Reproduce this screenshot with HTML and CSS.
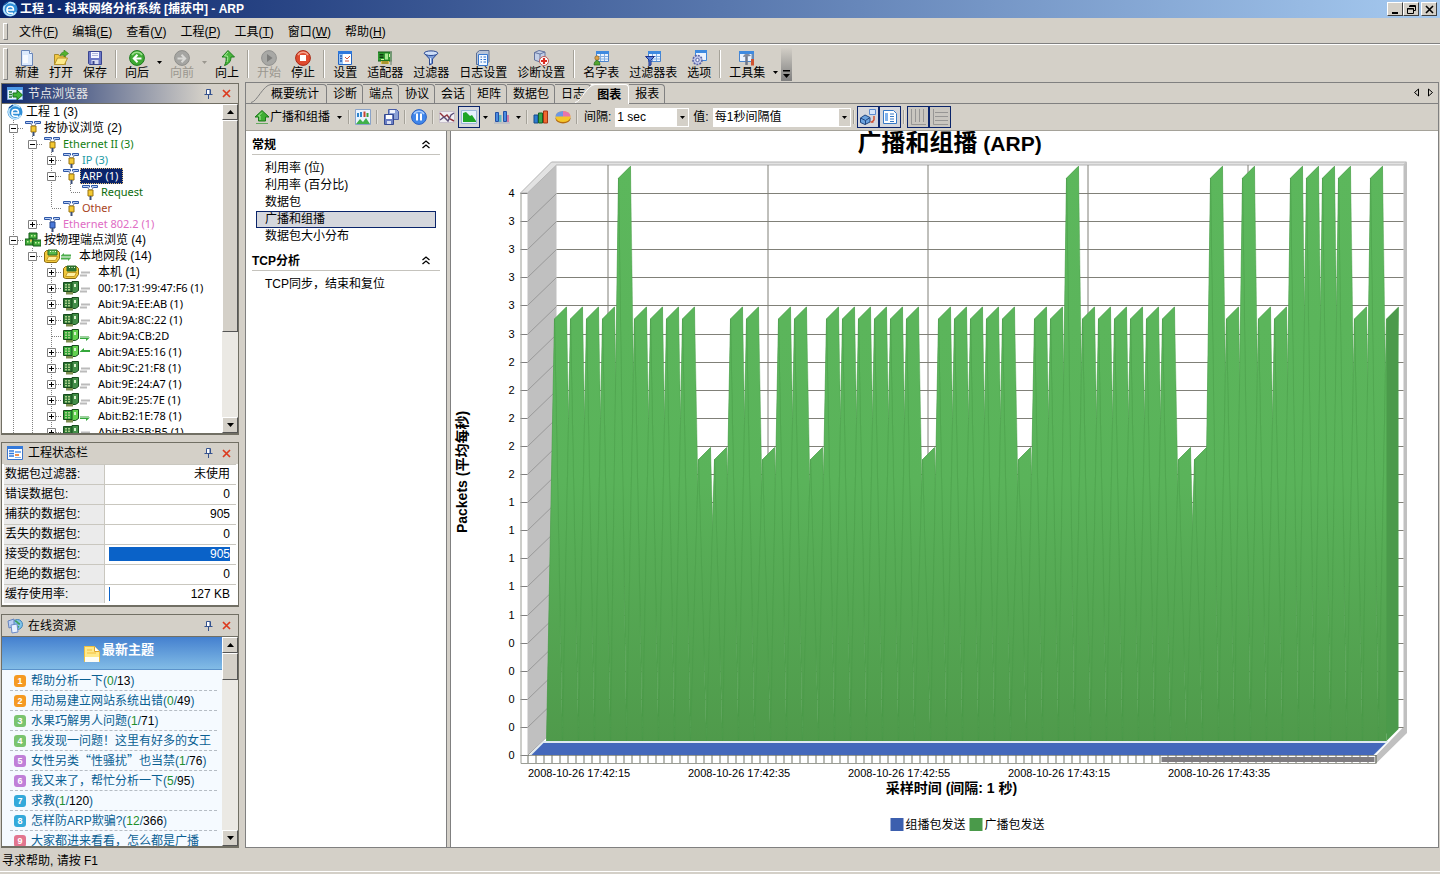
FILE: index.html
```html
<!DOCTYPE html>
<html lang="zh-CN">
<head>
<meta charset="utf-8">
<title>工程 1 - 科来网络分析系统 [捕获中] - ARP</title>
<link rel="stylesheet" href="styles.css">
</head>
<body>
<svg class="sprite" aria-hidden="true">
  <symbol id="i-logo" viewBox="0 0 16 16"><circle cx="8" cy="8" r="7.5" fill="#2f8fd8"/><path d="M13 3.5A6.5 6.5 0 1 0 14 11" fill="none" stroke="#bfe4fb" stroke-width="1.6"/><path d="M5 9h6.5A3.3 3.3 0 1 0 8 12.200h3" fill="none" stroke="#fff" stroke-width="1.500"/><path d="M2 4 6 1" stroke="#0d4f9e" stroke-width="1.500"/></symbol>
  <symbol id="i-new" viewBox="0 0 16 16"><path d="M2.500.5h8l3 3v12h-11z" fill="#dceafc" stroke="#6a86b8"/><path d="M10.500.5v3h3" fill="#fff" stroke="#6a86b8"/><path d="M4 5h5v8H4z" fill="#f6faff"/></symbol>
  <symbol id="i-open" viewBox="0 0 16 16"><path d="M1.500 14.500v-10h4l1 1.500h6v8.500z" fill="#f3c945" stroke="#a98a2b"/><path d="m1.500 14.500 3-6.500h10l-3 6.500z" fill="#fdea8a" stroke="#b8952c"/><path d="M7 5.500c1-3 3-3.500 4-3.500V0l4.500 3.500L11 7V5c-1.500-.3-3 0-4 .5z" fill="#54b32e" stroke="#2e7f1d" stroke-width=".6"/></symbol>
  <symbol id="i-save" viewBox="0 0 16 16"><path d="M1.500 1.500h13v13h-12l-1-1z" fill="#6d78c6" stroke="#3a4590"/><path d="M4 2h8v6H4z" fill="#f6f7ff"/><path d="M5 3.500h6M5 5.500h6" stroke="#b0b8dd"/><path d="M4.500 10h7v4h-7z" fill="#d7dbf0"/><path d="M5.500 11h2v3h-2z" fill="#3a4590"/></symbol>
  <symbol id="i-back" viewBox="0 0 16 16"><circle cx="8" cy="8" r="7.400" fill="#3faa35" stroke="#1d7a1d"/><path d="M3 5a6 6 0 0 1 10 0" fill="none" stroke="#9be08d" stroke-width="1.500"/><path d="M12.500 8.500H5M8.500 4.800 4.800 8.500l3.700 3.700" fill="none" stroke="#fff" stroke-width="2"/></symbol>
  <symbol id="i-fwd" viewBox="0 0 16 16"><circle cx="8" cy="8" r="7.400" fill="#a5a5a2" stroke="#8e8e8b"/><path d="M3.500 8.500H11M7.500 4.800l3.700 3.700-3.700 3.700" fill="none" stroke="#d9d9d6" stroke-width="2"/></symbol>
  <symbol id="i-up" viewBox="0 0 16 16"><path d="M9 .5 15.500 7H12c0 4-2 7-6.500 8.500C7 12.500 7.500 10 7 7H3z" fill="#49b53c" stroke="#1c7c1c"/><path d="M9 2 5.500 6H8.500c.5 2 .3 4-.5 6" fill="none" stroke="#a8eb99"/></symbol>
  <symbol id="i-play" viewBox="0 0 16 16"><circle cx="8" cy="8" r="7.400" fill="#a8a8a5" stroke="#929290"/><path d="m6 4 5.500 4L6 12z" fill="#7e7e7c"/></symbol>
  <symbol id="i-stop" viewBox="0 0 16 16"><circle cx="8" cy="8" r="7.400" fill="#df4a2e" stroke="#a92a16"/><path d="M3 5a6 6 0 0 1 10 0" fill="none" stroke="#f5a48e" stroke-width="1.500"/><path d="M5 5h6v6H5z" fill="#fff"/></symbol>
  <symbol id="i-set" viewBox="0 0 16 16"><path d="M1.500 1.500h13v13h-13z" fill="#fff" stroke="#2465c2"/><path d="M1 1h14v3H1z" fill="#2d78dd"/><path d="M2 4h4v10H2z" fill="#9cc5f4"/><path d="M3 6h2M3 8.500h2M3 11h2" stroke="#1f5cb8" stroke-width="1.300"/><path d="m8 7 2 2 3-3M8 11h4" fill="none" stroke="#d2553e"/></symbol>
  <symbol id="i-card" viewBox="0 0 16 16"><path d="M1 2h14v9H1z" fill="#2f9a30"/><path d="M1 2h14M1 11h14" stroke="#135813"/><path d="M2.500 4h4v1.500h-4zM2.500 6.500h4V8h-4z" fill="#103c10"/><path d="M8 3.500h3v6H8z" fill="#a9e893"/><path d="M12.500 4v3M4 9.500h3" stroke="#d8f4a9"/><path d="M4 11h8v3H4z" fill="#d9c04a"/><path d="M6 11v3M8 11v3M10 11v3" stroke="#7a6a1b"/><path d="M14 1v14" stroke="#8a9a8a" stroke-width="1.500"/></symbol>
  <symbol id="i-filter" viewBox="0 0 16 16"><path d="M1.500 3.500 6.500 9v6l3-1.500V9l5-5.500z" fill="#7ea0dc" stroke="#2c4a93"/><ellipse cx="8" cy="3.200" rx="6.800" ry="2.300" fill="#cfdff8" stroke="#2c4a93"/><path d="M7.500 8v5" fill="none" stroke="#e8f1ff"/></symbol>
  <symbol id="i-log" viewBox="0 0 16 16"><path d="m1.500 3 3-2.500h9.500v11l-3 3h-9.500z" fill="#b7c3d8" stroke="#5a6d92"/><path d="M3.500 4.500h9v11h-9z" fill="#f3f8ff" stroke="#3878cf"/><path d="M5.500 7h1.500M8.500 7H11M5.500 9.500h1.500M8.500 9.500H11M5.500 12h1.500M8.500 12H11" stroke="#2c6ecb"/></symbol>
  <symbol id="i-diag" viewBox="0 0 16 16"><path d="M1.500 2.500 6 .5l6 1.500v8L7 12l-5.500-2z" fill="#c4cfe6" stroke="#6474a0"/><path d="M1.500 2.500 7 4v8M7 4l5-2" fill="none" stroke="#6474a0"/><circle cx="11" cy="11" r="4.500" fill="#fff" stroke="#bd5a54"/><path d="M11 8v6M8 11h6" stroke="#db2b20" stroke-width="2.200"/></symbol>
  <symbol id="i-table" viewBox="0 0 16 16"><path d="M3.500 1.500h12v10h-12z" fill="#eaf3ff" stroke="#4a84cd"/><path d="M3 1h13v3H3z" fill="#3e8ae0"/><path d="M7.500 4v7M11.500 4v7M4 6.500h11M4 9h11" stroke="#80aee3"/></symbol>
  <symbol id="i-names" viewBox="0 0 16 16"><use href="#i-table"/><circle cx="4" cy="8" r="2.200" fill="#dda24b" stroke="#7c5918" stroke-width=".6"/><path d="M1 15c0-6 6-6 6 0z" fill="#51a52e" stroke="#25691a" stroke-width=".7"/></symbol>
  <symbol id="i-ftable" viewBox="0 0 16 16"><use href="#i-table"/><path d="M.5 6.500h9L6 10v5l-2 1v-6z" fill="#5580dc" stroke="#1c2f86"/></symbol>
  <symbol id="i-opt" viewBox="0 0 16 16"><path d="M4.500.5h11v10h-11z" fill="#eaf3ff" stroke="#3e86dc"/><path d="M4 0h12v3H4z" fill="#3e8ae0"/><circle cx="6.500" cy="10" r="4.500" fill="#c3c9ea" stroke="#5863a8" stroke-width="1.600" stroke-dasharray="2 1"/><circle cx="6.500" cy="10" r="1.700" fill="#fff" stroke="#5863a8"/></symbol>
  <symbol id="i-tools" viewBox="0 0 16 16"><path d="M.5 1.500h14v10H.5z" fill="#eaf3ff" stroke="#4a84cd"/><path d="M0 1h15v3H0z" fill="#3e8ae0"/><path d="M7.500 15V6" stroke="#6d7689" stroke-width="2.500"/><path d="M4 7c1-4 6-4 8-1z" fill="#7f8a9f"/><path d="M13.500 4v5" stroke="#6b8db6" stroke-width="2"/><path d="M13.500 9v6.500" stroke="#cf5230" stroke-width="3"/></symbol>
  <symbol id="i-browse" viewBox="0 0 16 16"><path d="M.5 1.500h15v12H.5z" fill="#e5f1ff" stroke="#79a7df"/><path d="M0 1h16v3H0z" fill="#4d9ae8"/><path d="M2 6h3M2 8.500h3M2 11h3" stroke="#237b35" stroke-width="1.500"/><path d="M6 7h4V4l5.500 5L10 14v-3H6z" fill="#3db336" stroke="#156f1b"/></symbol>
  <symbol id="i-status" viewBox="0 0 16 16"><path d="M.5 1.500h15v13H.5z" fill="#fff" stroke="#3c75c9"/><path d="M0 1h16v3H0z" fill="#3379da"/><path d="M2 6h5M2 8.500h5M2 11h5" stroke="#3379da" stroke-width="1.300"/><path d="M8 6h6v2H8zM8 12h6v1H8z" fill="#82b2ee"/><path d="M8 9h4v2H8z" fill="#f2914a"/></symbol>
  <symbol id="i-online" viewBox="0 0 16 16"><circle cx="10.500" cy="6.500" r="5" fill="#7fc2e8" stroke="#4384b8"/><path d="M8 3c3 0 2 3 5 3M8 8l4 1" stroke="#3f9f55" stroke-width="1.600" fill="none"/><path d="m1 3 6-2v7l-5 2z" fill="#bcd0f2" stroke="#6382bd"/><path d="m4 7 6-1 1 8-6 1z" fill="#e8f1ff" stroke="#6b8bc8"/></symbol>
  <symbol id="i-proto" viewBox="0 0 16 16"><path d="M.5 1.500h7v2h-7zM9.500 1.500h6v2h-6z" fill="#b9cff6" stroke="#2e58a8"/><path d="M5.500 3.500 7.500 6h2l2-2.500" fill="#fff" stroke="#68779a"/><path d="M6 6h5v6H6z" fill="var(--p,#f4c933)" stroke="var(--q,#9a7410)"/><path d="M8.500 12v4" stroke="#3a4f78" stroke-width="2"/></symbol>
  <symbol id="i-nodes" viewBox="0 0 16 16"><g id="nodecard"><path d="M4 1h8v6H4z" fill="#3fa83a" stroke="#155b16"/><path d="M6 3h1.500v1.500H6zM9 3h1.500v1.500H9z" fill="#c8f5a0"/></g><use href="#nodecard" x="-4" y="6"/><use href="#nodecard" x="4" y="7"/><path d="M5 7.500h2v2H5z" fill="#e3c24d"/></symbol>
  <symbol id="i-seg" viewBox="0 0 16 16"><path d="M.5 13.500v-9l2-2h11l2 2v6l-3 4h-10z" fill="#f1c83a" stroke="#8a6a12"/><path d="M4 2h9v5H4z" fill="var(--p,#56b84a)" stroke="#2d6d25"/><path d="M6 3.500h1M8.500 3.500h1M11 3.500h1" stroke="#eaffd8"/><path d="m2.500 12.500 2-4h9l-2 4z" fill="#fff0a0" stroke="#c59b25"/></symbol>
  <symbol id="i-host" viewBox="0 0 16 16"><path d="M.5 2.500h11v9H.5z" fill="var(--p,#2c7433)" stroke="#174d1d"/><path d="M2 4h2v1.500H2zM5 4h2v1.500H5zM2 6.500h2V8H2zM5 6.500h2V8H5zM2 9h2v1.500H2zM5 9h2v1.500H5z" fill="#a9cf88"/><path d="M9 1.500h6.500v9l-3 2H9z" fill="var(--q,#438f49)" stroke="#174d1d"/><path d="M11 4h2v3h-2z" fill="#d8f0cc"/><path d="M3 12h7v2.500H3z" fill="#7f8f50"/></symbol>
  <symbol id="i-traf" viewBox="0 0 10 16"><path d="M0 7.500 3 5v1.500h7v2H0zM10 10l-3 3v-1.500H0v-2h10z" fill="currentColor"/></symbol>
  <symbol id="i-in" viewBox="0 0 10 16"><path d="M0 7.500 4 4v2h6v2H0z" fill="#35a83b"/></symbol>
  <symbol id="i-out" viewBox="0 0 10 16"><path d="M0 8h9v1H0z" fill="#9ccf9b"/><path d="M10 9.500 6 13v-2H0V9.500z" fill="#35a83b"/></symbol>
  <symbol id="i-idle" viewBox="0 0 10 16"><path d="M1 8.500h9M0 11.500h7" stroke="#bbb" stroke-width="2"/></symbol>
  <symbol id="i-home" viewBox="0 0 16 16"><path d="M8 1.500 15 8h-3.500v4h-7V8H1z" fill="#3fae34" stroke="#1c7a1b"/><path d="M2 14.500h12" stroke="#65a95f"/><path d="M8 3.500 4.500 7H6v4" stroke="#a9eb9d" fill="none"/></symbol>
  <symbol id="i-img" viewBox="0 0 16 16"><path d="M.5.5h15v15H.5z" fill="#e9f3ff" stroke="#8aa3c8"/><path d="M3 4v4M6 3v5" stroke="#2e86cc" stroke-width="2"/><path d="M9.500 2.500V8" stroke="#c84431" stroke-width="2"/><path d="M12.500 4v4" stroke="#3c9d3a" stroke-width="2"/><path d="m1 15 4-5 3 3 3-4 4 6z" fill="#3fb04a"/></symbol>
  <symbol id="i-saves" viewBox="0 0 16 16"><path d="M5.500.5h8l2 2v8h-10z" fill="#8ba0d5" stroke="#4a5ea8"/><path d="M7 1h5v3H7z" fill="#eef2fc"/><path d="M1.500 5.500h9v10h-9z" fill="#6b7fc4" stroke="#35498f"/><path d="M3 6h6v4H3z" fill="#fff"/><path d="M4 12h4v3H4z" fill="#d9dff2"/></symbol>
  <symbol id="i-pause" viewBox="0 0 16 16"><circle cx="8" cy="8" r="7.400" fill="#3f86ea" stroke="#2a5fc0"/><path d="M3 5a6 6 0 0 1 10 0" fill="none" stroke="#a9ccfb" stroke-width="1.500"/><path d="M6 4.500v7M10 4.500v7" stroke="#fff" stroke-width="2"/></symbol>
  <symbol id="i-line" viewBox="0 0 16 16"><path d="M.5 2.500h15v11H.5z" fill="#f0eef2" stroke="#c9c1cb"/><path d="m1 4 4 4 3-2 3 4 4 2" fill="none" stroke="#93343e" stroke-width="1.400"/><path d="m1 11 4-3 4 4 3-6 3-2" fill="none" stroke="#5c4e76" stroke-width="1.400"/></symbol>
  <symbol id="i-area" viewBox="0 0 16 16"><path d="M.5 1.500h15v13H.5z" fill="#e6f1fd" stroke="#9db7d8"/><path d="M2 13V4l3-1 4 4 2-1 4 6v1z" fill="#1ea528"/></symbol>
  <symbol id="i-bars" viewBox="0 0 16 16"><path d="M1.500 3.500h3v9h-3zM9.500 2.500h3v10h-3z" fill="#4a8be0" stroke="#2350a4"/><path d="M5 6h2.500v7H5z" fill="#5ab6c7"/><path d="M13 6h2v7h-2z" fill="#d07ba5"/><path d="M0 14h16" stroke="#a8b1c5"/></symbol>
  <symbol id="i-bar3" viewBox="0 0 16 16"><path d="M1 6h4v8H1z" fill="#2c7cd0" stroke="#174b89"/><path d="M5.500 4h4v10h-4z" fill="#37a74c" stroke="#156327"/><path d="M10.500 2h4v12h-4z" fill="#ef6a2f" stroke="#a63412"/></symbol>
  <symbol id="i-pie" viewBox="0 0 16 16"><ellipse cx="8" cy="9.500" rx="7.500" ry="5" fill="#b56d12"/><ellipse cx="8" cy="7.500" rx="7.500" ry="5.500" fill="#f4c52a"/><path d="M8 7.500V2a7.500 5.500 0 0 1 7.500 5.500z" fill="#e775ae"/><path d="M8 7.500H.5A7.500 5.500 0 0 1 8 2z" fill="#6c97e6"/></symbol>
  <symbol id="i-cube" viewBox="0 0 16 16"><path d="m.5 9 4.500-3 5 2.500V13l-5 2.500-4.500-2z" fill="#6aa2df" stroke="#20457e"/><path d="m.5 9 5 2.500L10 8.500M5.500 11.500v4" stroke="#20457e" fill="none"/><path d="M9.500.5h6v5h-6z" fill="#d5e6fb" stroke="#5b8ad0"/><path d="m12 13 2-2V7M10.500 13h3" stroke="#d14a2a" stroke-width="1.400" fill="none"/></symbol>
  <symbol id="i-legend" viewBox="0 0 16 16"><path d="M1.500 1.500h10l3 3v10h-13z" fill="#fff" stroke="#3779c6"/><path d="M3 4h3v8H3z" fill="#7fb2ee"/><path d="M8 5h4M8 7.500h4M8 10h4M8 12.500h4" stroke="#3779c6"/></symbol>
  <symbol id="i-vgrid" viewBox="0 0 16 16"><path d="M1.500 0v15.500H16M5.500 0v13M9.500 0v13M13.500 0v13" stroke="#8a8a8a" fill="none" stroke-width=".8"/></symbol>
  <symbol id="i-hgrid" viewBox="0 0 16 16"><path d="M1.500 0v15.500H16M3 3.500h13M3 7.500h13M3 11.500h13" stroke="#8a8a8a" fill="none" stroke-width=".8"/></symbol>
  <symbol id="i-drop" viewBox="0 0 5 3"><path d="M0 0h5L2.500 3z" fill="currentColor"/></symbol>
  <symbol id="i-tri" viewBox="0 0 7 4"><path d="M0 4h7L3.500 0z" fill="#000"/></symbol>
  <symbol id="i-pin" viewBox="0 0 9 10"><path d="M2.500.5h4v5h-4zM.5 5.500h8M4.500 6v4" fill="#fff" stroke="#35528e"/><path d="M6 1v5" stroke="#35528e"/></symbol>
  <symbol id="i-x" viewBox="0 0 9 9"><path d="m1 1 7 7M8 1 1 8" stroke="#dc3a1e" stroke-width="1.700"/></symbol>
  <symbol id="i-note" viewBox="0 0 16 18"><path d="M.5 1.500h10l5 5v10H.5z" fill="#ffe98a" stroke="#f0c040"/><path d="M10.500 1.500v5h5" fill="#fff" stroke="#e0a62c"/><path d="M1 12h14v5H1z" fill="#fdfdf5"/><path d="M3 5h5M3 8h9" stroke="#f2bf3e"/></symbol>
  <symbol id="i-chev" viewBox="0 0 8 9"><path d="m.5 4 3.500-3 3.500 3M.5 8 4 5l3.500 3" fill="none" stroke="#000" stroke-width="1.300"/></symbol>
</svg>

<div class="app">
  <header class="titlebar">
    <svg class="ic"><use href="#i-logo"/></svg>
    <h1>工程 1 - 科来网络分析系统 [捕获中] - ARP</h1>
    <div class="winbtns">
      <button aria-label="最小化"><svg viewBox="0 0 9 9"><path d="M1 7h6v2H1z"/></svg></button>
      <button aria-label="还原"><svg viewBox="0 0 9 9"><path d="M2.500.5h6v5h-2M2 1.500h7M.5 3.500h6v5h-6zM0 4h7" fill="none" stroke="#000"/></svg></button>
      <button class="close" aria-label="关闭"><svg viewBox="0 0 9 9"><path d="m1 1 7 7M8 1 1 8" stroke="#000" stroke-width="1.600"/></svg></button>
    </div>
  </header>
  <nav class="menubar">
    <button>文件(<u>F</u>)</button><button>编辑(<u>E</u>)</button><button>查看(<u>V</u>)</button><button>工程(<u>P</u>)</button><button>工具(<u>T</u>)</button><button>窗口(<u>W</u>)</button><button>帮助(<u>H</u>)</button>
  </nav>
  <div class="toolbar">
    <button><svg class="ic"><use href="#i-new"/></svg>新建</button>
    <button><svg class="ic"><use href="#i-open"/></svg>打开</button>
    <button><svg class="ic"><use href="#i-save"/></svg>保存</button>
    <i class="sep"></i>
    <button><svg class="ic"><use href="#i-back"/></svg>向后</button>
    <button class="dd" aria-label="后退列表"><svg class="drop"><use href="#i-drop"/></svg></button>
    <button disabled><svg class="ic"><use href="#i-fwd"/></svg>向前</button>
    <button class="dd" disabled aria-label="前进列表"><svg class="drop"><use href="#i-drop"/></svg></button>
    <button><svg class="ic"><use href="#i-up"/></svg>向上</button>
    <i class="sep"></i>
    <button disabled><svg class="ic"><use href="#i-play"/></svg>开始</button>
    <button><svg class="ic"><use href="#i-stop"/></svg>停止</button>
    <i class="sep"></i>
    <button><svg class="ic"><use href="#i-set"/></svg>设置</button>
    <button><svg class="ic"><use href="#i-card"/></svg>适配器</button>
    <button><svg class="ic"><use href="#i-filter"/></svg>过滤器</button>
    <button><svg class="ic"><use href="#i-log"/></svg>日志设置</button>
    <button><svg class="ic"><use href="#i-diag"/></svg>诊断设置</button>
    <i class="sep"></i>
    <button><svg class="ic"><use href="#i-names"/></svg>名字表</button>
    <button><svg class="ic"><use href="#i-ftable"/></svg>过滤器表</button>
    <button><svg class="ic"><use href="#i-opt"/></svg>选项</button>
    <i class="sep"></i>
    <button><svg class="ic"><use href="#i-tools"/></svg>工具集</button>
    <button class="dd low" aria-label="工具集列表"><svg class="drop"><use href="#i-drop"/></svg></button>
    <button class="more" aria-label="更多"><svg viewBox="0 0 7 8"><path d="M0 0h7v1.500H0zM0 4h7L3.500 8z"/></svg></button>
  </div>

  <div class="work">
    <aside class="dock">
      <section class="panel tree-panel">
        <header class="phead active"><svg class="ic"><use href="#i-browse"/></svg><h2>节点浏览器</h2><button aria-label="固定"><svg class="pin"><use href="#i-pin"/></svg></button><button aria-label="关闭"><svg class="x"><use href="#i-x"/></svg></button></header>
        <div class="pbody">
          <ul class="tree" id="tree"></ul>
          <div class="scroll"><button aria-label="上"><svg class="tri"><use href="#i-tri"/></svg></button><b class="thumb tall"></b><i></i><button class="down" aria-label="下"><svg class="tri"><use href="#i-tri"/></svg></button></div>
        </div>
      </section>
      <section class="panel">
        <header class="phead"><svg class="ic"><use href="#i-status"/></svg><h2>工程状态栏</h2><button aria-label="固定"><svg class="pin"><use href="#i-pin"/></svg></button><button aria-label="关闭"><svg class="x"><use href="#i-x"/></svg></button></header>
        <table class="stats">
          <tr><th scope="row">数据包过滤器:</th><td>未使用</td></tr>
          <tr><th scope="row">错误数据包:</th><td>0</td></tr>
          <tr><th scope="row">捕获的数据包:</th><td>905</td></tr>
          <tr><th scope="row">丢失的数据包:</th><td>0</td></tr>
          <tr><th scope="row">接受的数据包:</th><td><span class="meter">905</span></td></tr>
          <tr><th scope="row">拒绝的数据包:</th><td>0</td></tr>
          <tr><th scope="row">缓存使用率:</th><td><span class="meter low">127 KB</span></td></tr>
        </table>
      </section>
      <section class="panel news-panel">
        <header class="phead"><svg class="ic"><use href="#i-online"/></svg><h2>在线资源</h2><button aria-label="固定"><svg class="pin"><use href="#i-pin"/></svg></button><button aria-label="关闭"><svg class="x"><use href="#i-x"/></svg></button></header>
        <div class="pbody">
          <div class="news">
            <h3><svg class="note"><use href="#i-note"/></svg>最新主题</h3>
            <ol>
              <li><b class="o">1</b><a href="#">帮助分析一下(<em>0</em>/<s>13</s>)</a></li>
              <li><b class="o">2</b><a href="#">用动易建立网站系统出错(<em>0</em>/<s>49</s>)</a></li>
              <li><b class="g">3</b><a href="#">水果巧解男人问题(<em>1</em>/<s>71</s>)</a></li>
              <li><b class="g">4</b><a href="#">我发现一问题！这里有好多的女王</a></li>
              <li><b class="p">5</b><a href="#">女性另类<span class="q">“</span>性骚扰<span class="q">”</span>也当禁(<em>1</em>/<s>76</s>)</a></li>
              <li><b class="p">6</b><a href="#">我又来了，帮忙分析一下(<em>5</em>/<s>95</s>)</a></li>
              <li><b class="c">7</b><a href="#">求教(<em>1</em>/<s>120</s>)</a></li>
              <li><b class="c">8</b><a href="#">怎样防ARP欺骗?(<em>12</em>/<s>366</s>)</a></li>
              <li><b class="r">9</b><a href="#">大家都进来看看，怎么都是广播</a></li>
            </ol>
          </div>
          <div class="scroll"><button aria-label="上"><svg class="tri"><use href="#i-tri"/></svg></button><b class="thumb"></b><i></i><button class="down" aria-label="下"><svg class="tri"><use href="#i-tri"/></svg></button></div>
        </div>
      </section>
    </aside>

    <main class="main">
      <div class="tabs" role="tablist">
        <svg class="slant first" viewBox="0 0 20 19"><path d="M0 18.500C6 18 12 1 20 .5" fill="none" stroke="#808080"/></svg>
        <button role="tab" class="t1">概要统计</button><button role="tab">诊断</button><button role="tab">端点</button><button role="tab">协议</button><button role="tab">会话</button><button role="tab">矩阵</button><button role="tab">数据包</button><button role="tab">日志</button><button role="tab" class="on" aria-selected="true"><svg class="slant" viewBox="0 0 20 19"><path d="M0 19C6 18 12 1 20 .5V19z" fill="#d4d0c8"/><path d="M0 18.500C6 18 12 1 20 .5" fill="none" stroke="#fff"/></svg><span>图表</span></button><button role="tab">报表</button>
        <span class="fill"></span>
        <svg class="nav" viewBox="0 0 20 9"><path d="M4.500 1v7L.5 4.500zM14.500 1v7l4-3.500z" fill="none" stroke="#000"/></svg>
      </div>
      <div class="ctools">
        <button class="text"><svg class="ic"><use href="#i-home"/></svg>广播和组播<svg class="drop"><use href="#i-drop"/></svg></button>
        <i class="sep"></i>
        <button aria-label="图像"><svg class="ic"><use href="#i-img"/></svg></button>
        <i class="sep"></i>
        <button aria-label="保存"><svg class="ic"><use href="#i-saves"/></svg></button>
        <i class="sep"></i>
        <button aria-label="暂停"><svg class="ic"><use href="#i-pause"/></svg></button>
        <i class="sep"></i>
        <button aria-label="线图"><svg class="ic"><use href="#i-line"/></svg></button>
        <button class="sel" aria-label="面积图"><svg class="ic"><use href="#i-area"/></svg></button>
        <button class="dd" aria-label="面积图列表"><svg class="drop"><use href="#i-drop"/></svg></button>
        <button aria-label="柱图"><svg class="ic"><use href="#i-bars"/></svg></button>
        <button class="dd" aria-label="柱图列表"><svg class="drop"><use href="#i-drop"/></svg></button>
        <i class="sep"></i>
        <button aria-label="立体柱图"><svg class="ic"><use href="#i-bar3"/></svg></button>
        <button aria-label="饼图"><svg class="ic"><use href="#i-pie"/></svg></button>
        <i class="sep"></i>
        <label for="interval">间隔:</label>
        <span class="combo"><select id="interval"><option>1 sec</option></select><svg class="drop"><use href="#i-drop"/></svg></span>
        <label for="value">值:</label>
        <span class="combo wide"><select id="value"><option>每1秒间隔值</option></select><svg class="drop"><use href="#i-drop"/></svg></span>
        <i class="sep"></i>
        <button class="sel" aria-label="三维"><svg class="ic"><use href="#i-cube"/></svg></button>
        <button class="sel" aria-label="图例"><svg class="ic"><use href="#i-legend"/></svg></button>
        <i class="sep"></i>
        <button class="sel grid" aria-label="垂直网格"><svg class="ic"><use href="#i-vgrid"/></svg></button>
        <button class="sel grid" aria-label="水平网格"><svg class="ic"><use href="#i-hgrid"/></svg></button>
      </div>
      <div class="content">
        <nav class="types">
          <h3>常规<svg class="chev"><use href="#i-chev"/></svg></h3>
          <ul>
            <li><a href="#">利用率 (位)</a></li>
            <li><a href="#">利用率 (百分比)</a></li>
            <li><a href="#">数据包</a></li>
            <li class="cur"><a href="#">广播和组播</a></li>
            <li><a href="#">数据包大小分布</a></li>
          </ul>
          <h3>TCP分析<svg class="chev"><use href="#i-chev"/></svg></h3>
          <ul>
            <li><a href="#">TCP同步，结束和复位</a></li>
          </ul>
        </nav>
        <div class="splitter"></div>
        <div class="chartbox"><svg id="chart" viewBox="451 131 986 716" role="img" aria-label="广播和组播 (ARP)"></svg></div>
      </div>
    </main>
  </div>
  <footer class="statusbar">寻求帮助, 请按 F1</footer>
</div>
<script src="script.js"></script>
</body>
</html>
```

FILE: styles.css
```css
* { box-sizing: border-box; }
html, body { height: 100%; margin: 0; }
body {
  background: #d4d0c8;
  color: #000;
  font: 12px/16px "Liberation Sans", "Noto Sans CJK SC", sans-serif;
  overflow: hidden;
}
button, select { font: inherit; color: inherit; background: none; border: 0; padding: 0; margin: 0; }
h1, h2, h3, ul, ol { margin: 0; padding: 0; font: inherit; list-style: none; }
a { color: inherit; text-decoration: none; }
svg { display: block; flex: none; }
.sprite { position: absolute; width: 0; height: 0; }
.ic { width: 16px; height: 16px; }
.drop { width: 5px; height: 3px; }
.app { display: flex; flex-direction: column; height: 100vh; }

/* title bar */
.titlebar {
  display: flex; align-items: center; gap: 2px;
  height: 19px; padding: 0 3px 0 2px;
  background: linear-gradient(90deg, #0a246a, #a6caf0);
  border-bottom: 1px solid #d4d0c8;
  color: #fff;
}
.titlebar h1 { flex: 1; font-weight: bold; }
.winbtns { display: flex; }
.winbtns button {
  display: grid; place-items: center;
  width: 16px; height: 14px;
  background: #d4d0c8;
  border: 1px solid; border-color: #fff #404040 #404040 #fff;
}
.winbtns svg { width: 9px; height: 9px; }
.winbtns .close { margin-left: 2px; }

/* menu */
.menubar {
  display: flex; align-items: center;
  height: 25px; padding: 1px 9px 0;
  border-bottom: 1px solid #808080;
}
.menubar button { padding: 0 7px; }
.menubar::before, .toolbar::before {
  content: ""; flex: none; width: 3px; align-self: stretch;
  border: 1px solid; border-color: #fff #808080 #808080 #fff;
}
.menubar::before { margin: 3px 4px 3px -6px; }

/* main toolbar */
.toolbar {
  display: flex; align-items: stretch;
  height: 38px; padding: 2px 0 1px 3px;
  border-top: 1px solid #fff;
}
.toolbar::before { margin: 1px 2px 1px 0; }
.toolbar button {
  display: flex; flex-direction: column; align-items: center;
  padding: 3px 5px 0; line-height: 12px; white-space: nowrap;
}
.toolbar button .ic { margin-bottom: 1px; }
.toolbar button:disabled { color: #9a978f; }
.toolbar .dd { width: 11px; padding: 14px 0 0; }
.toolbar .dd.low { padding-top: 24px; }
.toolbar .sep { width: 2px; margin: 3px; border-left: 1px solid #a5a299; border-right: 1px solid #fff; }
.toolbar .more {
  justify-content: flex-end; width: 11px; padding: 0 0 3px;
  background: linear-gradient(#d4d0c8, #808080);
}
.toolbar .more svg { width: 7px; height: 8px; }

/* work area */
.work { flex: 1; display: flex; min-height: 0; gap: 6px; padding: 0 1px; }
.dock { display: flex; flex-direction: column; gap: 7px; width: 238px; padding-top: 1px; }
.panel { display: flex; flex-direction: column; border: 1px solid #716f64; border-width: 1px 1px 2px; }
.tree-panel { flex: 1; min-height: 0; }
.news-panel { height: 234px; }
.phead { display: flex; flex: none; align-items: center; height: 21px; padding: 0 5px; gap: 5px; }
.phead h2 { flex: 1; }
.phead.active { height: 19px; color: #e8e8e8; background: linear-gradient(90deg, #0a246a, #d4d0c8 86%); }
.phead button { display: grid; place-items: center; width: 13px; height: 14px; }
.pin { width: 9px; height: 10px; }
.x { width: 9px; height: 9px; }
.pbody { flex: 1; display: flex; min-height: 0; background: #fff; border-top: 1px solid #716f64; }
.scroll { display: flex; flex-direction: column; width: 16px; background: #ebe9e4; }
.scroll button, .thumb {
  display: grid; place-items: center; flex: none; height: 16px;
  background: #d4d0c8; border: 1px solid; border-color: #fff #555 #555 #fff;
}
.scroll i { flex: 1; }
.thumb { height: 27px; }
.thumb.tall { height: 212px; }
.tri { width: 7px; height: 4px; }
.down .tri { transform: rotate(180deg); }

/* tree */
.tree { flex: 1; padding-left: 2px; overflow: hidden; }
.tree li { display: flex; align-items: center; height: 16px; white-space: nowrap; }
.tree .latin { font: 11px/16px "Noto Sans", sans-serif; }
.tree .label { padding: 0 2px; }
.tree .ic { margin: 0 1px 0 2px; }
.tree .root .ic { margin-left: 3px; }
.tree .traffic { width: 10px; height: 16px; margin-right: 6px; }
.tree .sel .label { background: #0a246a; color: #fff; outline: 1px dotted #e5c07b; outline-offset: -1px; padding-right: 5px; }
.guide { flex: none; width: 19px; height: 16px; }

/* statistics */
.stats { border-collapse: collapse; width: 100%; background: #fff; border: 2px solid #fff; border-top-color: #808080; border-top-width: 1px; }
.stats th, .stats td { height: 20px; padding: 0; border: 1px solid #c9c7bf; line-height: 16px; }
.stats th { width: 101px; padding-left: 1px; background: #ebebeb; font-weight: normal; text-align: left; }
.stats td { padding: 0 6px 0 4px; text-align: right; }
.meter { display: block; height: 14px; line-height: 14px; background: #0a62c8; color: #fff; }
.meter.low { background: linear-gradient(90deg, #0a62c8 1px, #fff 1px); color: #000; }

/* news */
.news { flex: 1; min-width: 0; overflow: hidden; background: #f5faff; color: #0a5f93; }
.news h3 {
  display: flex; justify-content: center; align-items: flex-start; gap: 2px;
  height: 33px; padding: 5px 0 0 14px; color: #fff; font-size: 13px; font-weight: bold;
  background: linear-gradient(#4480cf, #82bce6); border-bottom: 1px solid #5b93cb;
}
.note { width: 16px; height: 18px; margin-top: 3px; }
.news ol { margin: 1px 5px 0 8px; }
.news li { display: flex; align-items: center; gap: 5px; height: 20px; padding-left: 4px; border-bottom: 1px dashed #b5bcc4; white-space: nowrap; }
.news li b { width: 12px; height: 12px; border-radius: 3px; color: #fff; font: bold 9px/12px "Liberation Sans", sans-serif; text-align: center; }
.news .q { font-family: "Noto Sans CJK SC", sans-serif; }
.news .o { background: #f59a23; }
.news .g { background: #7ac46f; }
.news .p { background: #c07fd8; }
.news .c { background: #33a9da; }
.news .r { background: #e2758f; }
.news em { font-style: normal; color: #1f8f2a; }
.news s { text-decoration: none; color: #000; }

/* main pane */
.main { flex: 1; min-width: 0; display: flex; flex-direction: column; border: 1px solid #808080; }
.tabs { display: flex; align-items: flex-end; height: 21px; padding: 2px 4px 0 5px; border-bottom: 1px solid #808080; }
.tabs button { height: 19px; padding: 0 5px 0 6px; border-top: 1px solid #808080; border-right: 1px solid #808080; border-radius: 0 4px 0 0; line-height: 18px; }
.tabs .t1 { padding-left: 0; padding-right: 7px; }
.slant { width: 20px; height: 19px; }
.tabs .on { position: relative; height: 20px; margin-bottom: -1px; padding-right: 7px; background: #d4d0c8; border-top-color: #fff; border-right-color: #fff; font-weight: bold; }
.tabs .on .slant { position: absolute; left: -16px; top: -1px; }
.tabs .on span { position: relative; }
.tabs .fill { flex: 1; }
.nav { width: 20px; height: 9px; align-self: center; margin-bottom: 4px; }

.ctools { display: flex; align-items: center; height: 27px; padding-left: 7px; border-bottom: 1px solid #a5a299; }
.ctools button { flex: none; display: flex; align-items: center; justify-content: center; width: 22px; height: 22px; }
.ctools .text { width: auto; padding: 0 4px 0 1px; }
.ctools .text .drop { margin-left: 7px; }
.ctools .sel { border: 1px solid #0a246a; background: #d5d7dd; }
.ctools .grid { background: #c9c6c0; }
.ctools .dd { width: 11px; }
.ctools .sep { flex: none; width: 2px; height: 14px; margin: 0 2px; border-left: 1px solid #a5a299; border-right: 1px solid #e6e3dd; }
.ctools label { margin: 0 4px; }
.combo { display: flex; align-items: center; position: relative; width: 74px; height: 19px; background: #fff; }
.combo.wide { width: 138px; }
.combo select { appearance: none; width: 100%; height: 100%; padding-left: 2px; }
.combo .drop { position: absolute; right: 1px; top: 1px; width: 11px; height: 17px; padding: 7px 3px; background: #d4d0c8; pointer-events: none; }

.content { flex: 1; display: flex; min-height: 0; background: #fff; }
.types { width: 200px; padding: 4px 6px 0; }
.types h3 { display: flex; align-items: center; justify-content: space-between; height: 20px; padding-right: 10px; border-bottom: 1px solid #c5c3bd; font-weight: bold; }
.chev { width: 8px; height: 9px; }
.types ul { padding: 5px 4px 6px; }
.types li { height: 17px; padding-left: 8px; border: 1px solid transparent; line-height: 15px; }
.types .cur { background: #d5d7dd; border-color: #0a246a; }
.splitter { width: 5px; background: #d4d0c8; border: 1px solid #808080; border-width: 0 1px; }
.chartbox { flex: 1; min-width: 0; }
#chart { width: 100%; height: 100%; }
#chart text { font-family: "Liberation Sans", "Noto Sans CJK SC", sans-serif; }
.tick { font-size: 11px; }
.axis { font-size: 14px; font-weight: bold; }
.ctitle { font-size: 21px; font-weight: bold; }
.ctitle .han { font-size: 24px; }
.legend { font-size: 12px; }

.statusbar { height: 24px; margin-bottom: 2px; padding: 5px 2px 0; border-bottom: 1px solid #fff; }
```

FILE: script.js
```js
// Guide codes: v line, p plus, m minus, q plus on a last child, t tee, l corner
const rows = [
  ['', 'logo', '工程 1 (3)', '', '', 'root'],
  ['m', 'proto', '按协议浏览 (2)'],
  ['vm', 'proto', 'Ethernet II (3)', '#138013'],
  ['vvp', 'proto', 'IP (3)', '#1a9aa5'],
  ['vvm', 'proto', 'ARP (1)', '', '', 'sel'],
  ['vvvl', 'proto', 'Request', '#0c6b0c'],
  ['vvl', 'proto', 'Other', '#a8431b'],
  ['vq', 'proto', 'Ethernet 802.2 (1)', '#e06cc4', '', 'blue'],
  ['m', 'nodes', '按物理端点浏览 (4)'],
  ['vm', 'seg', '本地网段 (14)', '', 'traf'],
  ['vvp', 'seg', '本机 (1)', '', 'idle', 'dark'],
  ['vvp', 'host', '00:17:31:99:47:F6 (1)', '', 'idle'],
  ['vvp', 'host', 'Abit:9A:EE:AB (1)', '', 'idle'],
  ['vvp', 'host', 'Abit:9A:8C:22 (1)', '', 'idle'],
  ['vvt', 'host', 'Abit:9A:CB:2D', '', 'out', 'lit'],
  ['vvp', 'host', 'Abit:9A:E5:16 (1)', '', 'in', 'lit'],
  ['vvp', 'host', 'Abit:9C:21:F8 (1)', '', 'idle'],
  ['vvp', 'host', 'Abit:9E:24:A7 (1)', '', 'idle'],
  ['vvp', 'host', 'Abit:9E:25:7E (1)', '', 'idle'],
  ['vvp', 'host', 'Abit:B2:1E:78 (1)', '', 'out', 'lit'],
  ['vvp', 'host', 'Abit:B3:5B:B5 (1)', '', 'idle']
];
const tint = {
  blue: '--p:#4a78d8;--q:#24468f',
  dark: '--p:#2c7433',
  lit: '--p:#2fa838;--q:#62d04f'
};
function guide(code) {
  const last = 'lq'.includes(code);
  let s = `<path d="M9.500 0V${last ? 8 : 16}${code === 'v' ? '' : 'M10 8.500h9'}" fill="none" stroke="#808080" stroke-dasharray="1 1"/>`;
  if ('pmq'.includes(code)) {
    s += `<path d="M5.500 4.500h8v8h-8z" fill="#fff" stroke="#808080"/><path d="M7 8.500h5${code === 'm' ? '' : 'M9.500 6v5'}" stroke="#000"/>`;
  }
  return `<svg class="guide" viewBox="0 0 19 16">${s}</svg>`;
}
document.getElementById('tree').innerHTML = rows.map(([g, icon, text, color, traffic, kind]) => {
  const latin = /^[\x00-\x7f]+$/.test(text) ? ' latin' : '';
  return `<li class="${kind || ''}">${[...g].map(guide).join('')}` +
    `<svg class="ic" style="${tint[kind] || ''}"><use href="#i-${icon}"/></svg>` +
    (traffic ? `<svg class="traffic" style="color:#4cae4c"><use href="#i-${traffic}"/></svg>` : '') +
    `<span class="label${latin}" style="${color ? 'color:' + color : ''}">${text}</span></li>`;
}).join('');

// Packets in every second sample; the samples between them are zero
const peaks = [3,3,3,3,4,3,3,3,3,2,2,3,3,2,3,3,2,3,3,3,3,3,3,2,3,3,3,3,3,2,3,3,4,3,3,3,3,3,3,2,2,4,3,4,3,3,4,4,4,4,3,4,3];
const labels = [4,3,3,3,3,3,2,2,2,2,2,1,1,1,1,1,0,0,0,0,0];
const times = ['15', '35', '55', '15', '35'];
const base = 741, unit = 140.7, depth = 12;
const out = [];
const poly = (pts, attrs) => out.push(`<polygon points="${pts.map(p => p.join()).join(' ')}" ${attrs}/>`);
const path = (d, attrs) => out.push(`<path d="${d}" fill="none" ${attrs}/>`);
const text = (x, y, str, attrs) => out.push(`<text x="${x}" y="${y}" ${attrs}>${str}</text>`);

out.push(`<defs><linearGradient id="area" gradientUnits="userSpaceOnUse" x1="0" y1="166" x2="0" y2="741">
<stop offset="0" stop-color="#5cb75c"/><stop offset=".55" stop-color="#5ab35a"/><stop offset="1" stop-color="#4f9a4b"/></linearGradient></defs>`);

poly([[527, 193], [556, 164], [556, 727], [527, 755]], 'fill="#c0c0c0"');
poly([[520, 193], [551, 162], [1406, 162], [1403, 165], [556, 165], [527, 193]], 'fill="#e2e2e2" stroke="#b4b4b4"');
poly([[1403, 165], [1406.5, 162], [1406.5, 733], [1376, 763], [1376, 755], [1403, 727]], 'fill="#c0c0c0"');
labels.forEach((v, i) => {
  const y = Math.round(193 + i * 28.1) + 0.5;
  text(514, y + 3.5, v, 'class="tick" text-anchor="end"');
  path(`M520 ${y}h7`, 'stroke="#808080"');
  if (i < 20) path(`M556 ${y}H1403`, 'stroke="#808078"');
  if (i) path(`M527 ${y}l29 -28`, 'stroke="#999"');
});
times.forEach((s, i) => {
  const x = 607.5 + i * 160;
  path(`M${x} 165V727l-14 14`, 'stroke="#808078"');
  text(x - 80, 777, `2008-10-26 17:4${i < 3 ? 2 : 3}:${s}`, 'class="tick"');
});

const pts = [[546, base]];
peaks.forEach((v, i) => {
  pts.push([554 + 16 * i, base - v * unit]);
  if (i < peaks.length - 1) pts.push([562 + 16 * i, base]);
});
const back = p => [p[0] + depth, p[1] - depth];
for (let i = 0; i < pts.length - 1; i++) {
  const a = pts[i], b = pts[i + 1];
  poly([a, b, back(b), back(a)], 'fill="url(#area)" stroke="#4a9a48" stroke-opacity=".6" stroke-width=".7"');
}
const end = pts[pts.length - 1];
poly([end, back(end), [1398, 729], [1386, 741]], 'fill="#4b9a4b"');
poly([...pts, [1386, base]], 'fill="url(#area)" stroke="#469a46" stroke-opacity=".45" stroke-width=".7"');

poly([[543, 741], [1388, 741], [1374, 755], [529, 755]], 'fill="#dfeaf0"');
poly([[543, 743], [1385, 743], [1373, 755], [531, 755]], 'fill="#4468bb"');
path('M520.500 193V763.500H1376M527 755.500H1376', 'stroke="#9a9c94"');
let ticks = '';
for (let x = 527.5; x < 1376; x += 8) ticks += `M${x} 755v8`;
path(ticks + 'M1375.500 755v8', 'stroke="#707468"');
out.push('<rect x="1161" y="757" width="213" height="5" fill="#7f7c80"/>');

text(857, 151, '<tspan class="han">广播和组播</tspan> (ARP)', 'class="ctitle"');
text(951, 793, '采样时间 (间隔: 1 秒)', 'class="axis" text-anchor="middle"');
text(0, 0, 'Packets (平均每秒)', 'class="axis" text-anchor="middle" transform="translate(466 472) rotate(-90)"');
out.push('<rect x="890" y="818" width="13" height="13" fill="#3c5fae"/><rect x="969" y="818" width="13" height="13" fill="#4a9a4a"/>');
text(905, 829, '组播包发送', 'class="legend"');
text(984, 829, '广播包发送', 'class="legend"');
document.getElementById('chart').innerHTML = out.join('');
```
